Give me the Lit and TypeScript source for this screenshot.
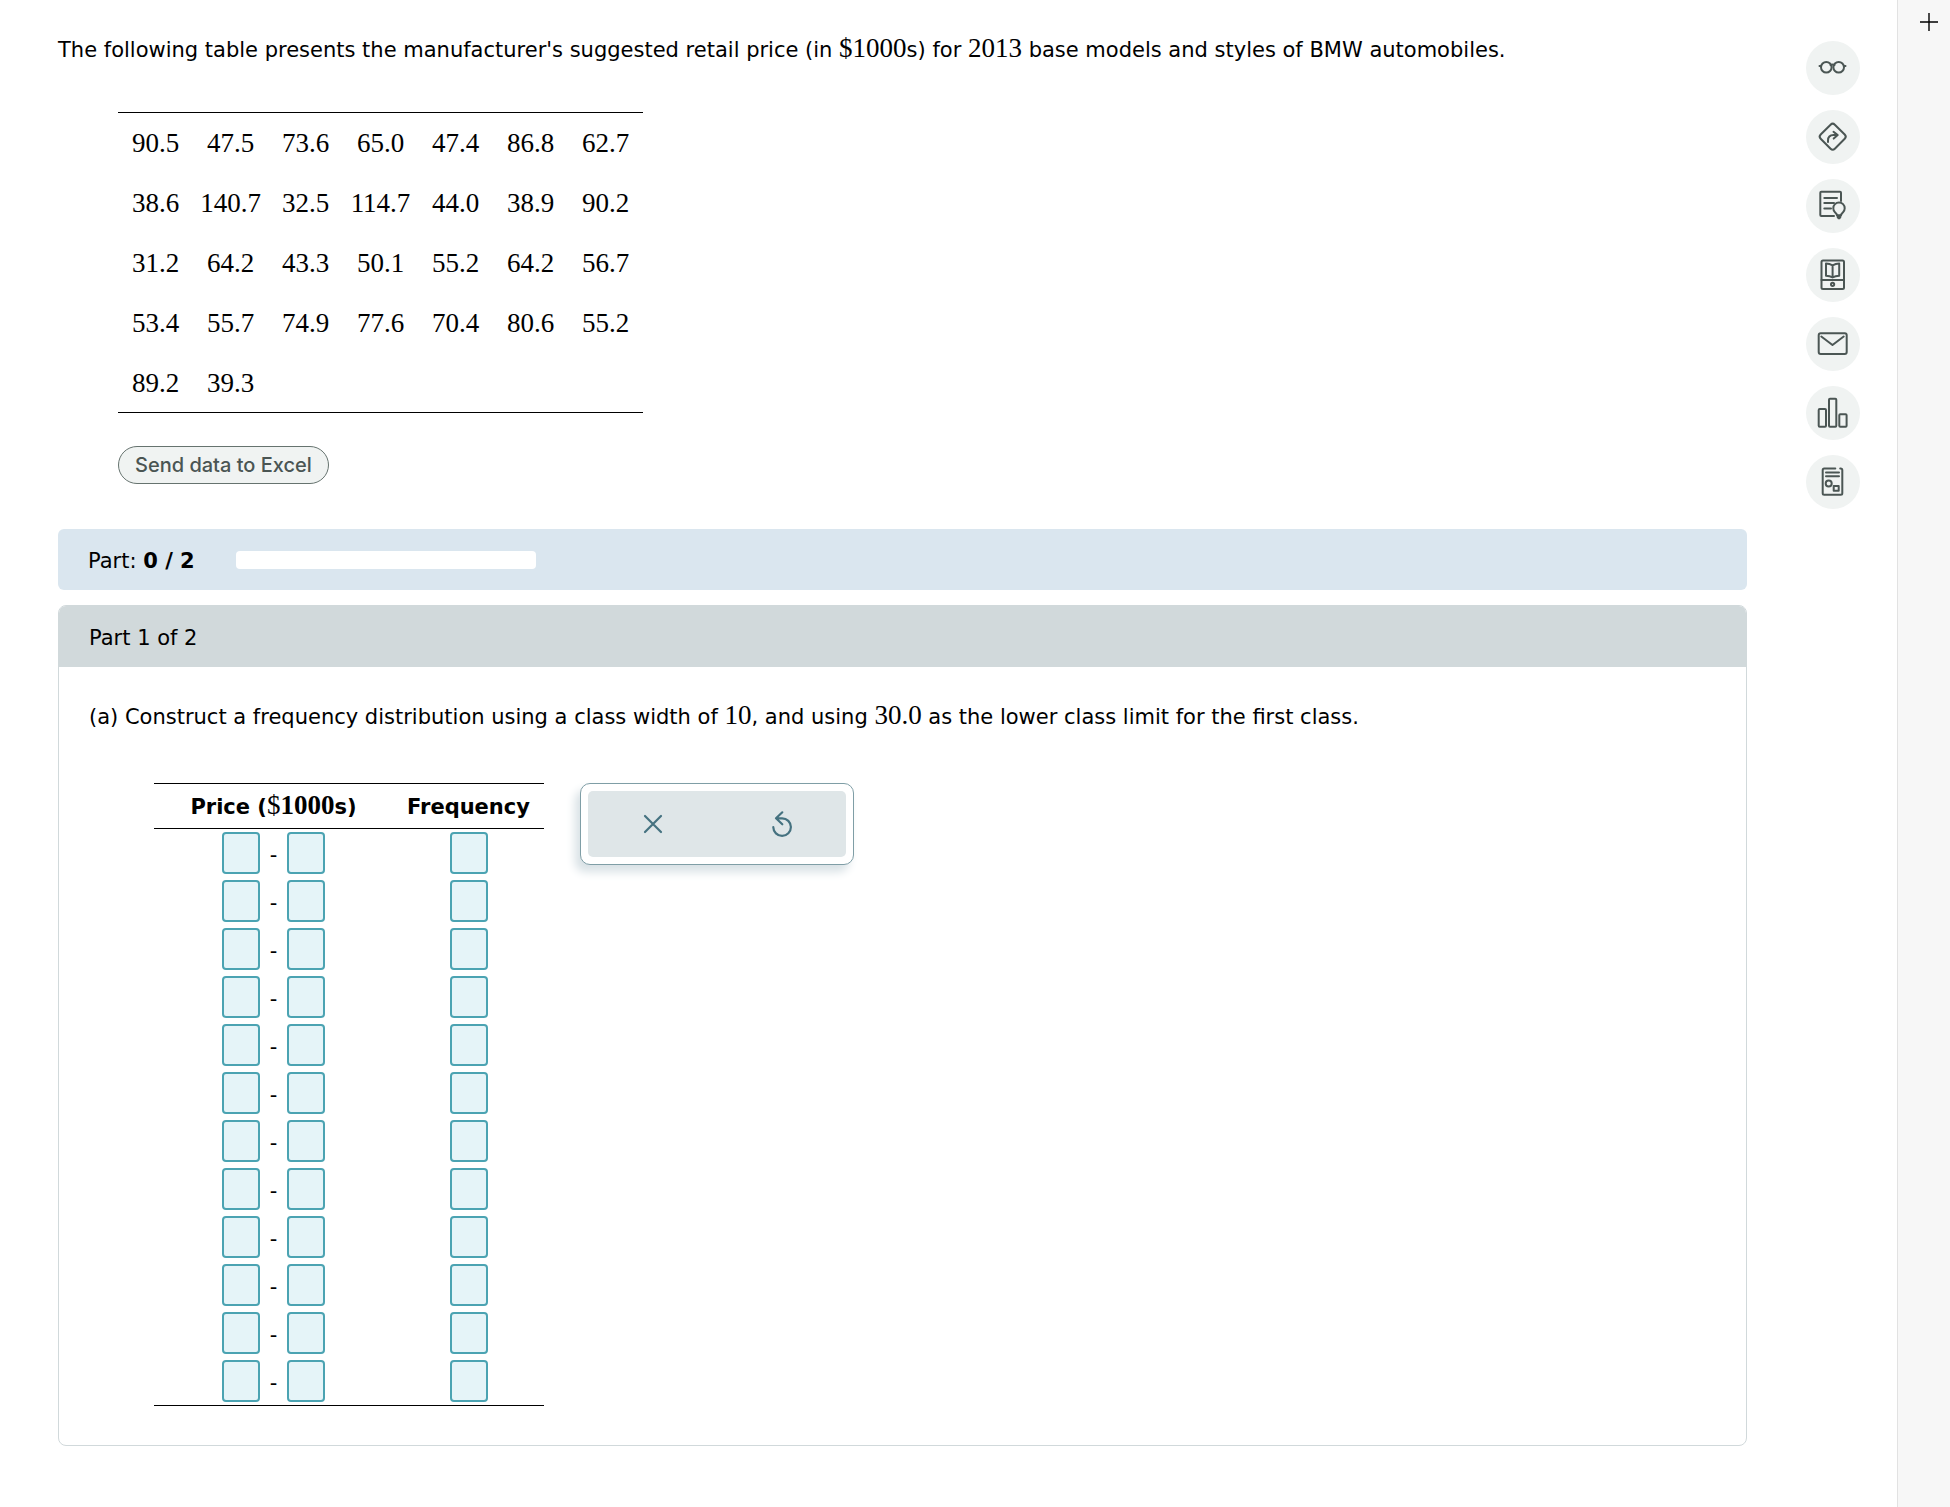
import { LitElement, html, css, svg } from "lit";
import { customElement } from "lit/decorators.js";

const PRICES = [
  ["90.5", "47.5", "73.6", "65.0", "47.4", "86.8", "62.7"],
  ["38.6", "140.7", "32.5", "114.7", "44.0", "38.9", "90.2"],
  ["31.2", "64.2", "43.3", "50.1", "55.2", "64.2", "56.7"],
  ["53.4", "55.7", "74.9", "77.6", "70.4", "80.6", "55.2"],
  ["89.2", "39.3", "", "", "", "", ""],
];

const CLASS_ROWS = Array.from({ length: 12 }, (_, i) => i + 1);

const TOOLS = [
  {
    label: "Reading view",
    icon: svg`<circle cx="20.3" cy="26.3" r="5.3"/><circle cx="32.7" cy="26.3" r="5.3"/>
      <path d="M13.500 25h1.500M38 25h1.500M24.500 24q2-1.200 4 0"/>`,
  },
  {
    label: "Directions",
    icon: svg`<rect x="16.7" y="16.7" width="20" height="20" rx="3" transform="rotate(45 26.7 26.7)"/>
      <path d="M22 32v-1.500q0-5.500 5.500-5.500h4M27.500 21.800l4.200 3.300-4 3.500"/>`,
  },
  {
    label: "Hint",
    icon: svg`<path d="M35 22v-8.300q0-1-1-1H15.300q-1 0-1 1V36q0 1 1 1H28"/>
      <path d="M18.300 19H31M18.300 24H28M18.300 29.500H25"/>
      <path d="M31 36.500q0-1.500-2-3.300a5.700 5.700 0 1 1 8 0q-2 1.800-2 3.300z"/>
      <path class="solid" d="M30.800 35.500h4.400v3l-1.200 1.800h-2l-1.200-1.800z"/>`,
  },
  {
    label: "Textbook",
    icon: svg`<rect x="15.500" y="12.500" width="22.500" height="28.500" rx="1.500"/><path d="M15.500 32H38"/>
      <circle cx="26.600" cy="36.300" r="1.600"/>
      <path d="M26.600 17.300q-3-1.500-6.600-1.700v12.200q3.800.2 6.600 1.600 2.800-1.400 6.600-1.600V15.600q-3.600.2-6.600 1.700v12"/>`,
  },
  {
    label: "Message",
    icon: svg`<rect x="12.700" y="16.200" width="28" height="20.800" rx="2"/><path d="M15.300 19.500l11.200 8.500 11.200-8.500"/>`,
  },
  {
    label: "Statistics",
    icon: svg`<rect x="12.700" y="23" width="7.300" height="17.700" rx="1"/><rect x="23" y="12.700" width="7.300" height="28" rx="1"/>
      <rect x="33.300" y="28.300" width="7.300" height="12.400" rx="1"/>`,
  },
  {
    label: "Worksheet",
    icon: svg`<path d="M29.300 13.500H18.200q-1.500 0-1.500 1.500v23.300q0 1.500 1.500 1.500h16.600q1.500 0 1.500-1.500V14.800q0-1-1.500-1.300h-.6"/>
      <path d="M20 17.500h13M20 21.200h13"/><circle cx="22.700" cy="28.500" r="3"/><rect x="27.700" y="31" width="5" height="4.700"/>`,
  },
];

@customElement("app-root")
export class AppRoot extends LitElement {
  static styles = css`
    :host {
      display: block;
      background: #fff;
      color: #000;
      font-family: "DejaVu Sans", sans-serif;
      font-size: 21px;
      line-height: 30px;
    }
    *, *::before, *::after { box-sizing: border-box; }
    .page { display: flex; min-height: 100vh; }
    .main { flex: 1; min-width: 0; padding: 35px 59px 60px 58px; }
    .text { margin: 0; }
    .num { font-family: "Liberation Serif", serif; font-size: 27px; line-height: 24px; }
    .light { font-weight: 400; }
    .data { margin: 47px 0 33px 60px; }
    .prices {
      border-collapse: collapse;
      border-top: 1px solid #000;
      border-bottom: 1px solid #000;
      table-layout: fixed;
      width: 525px;
    }
    .prices td { width: 75px; height: 60px; padding: 1px 0 0; text-align: center; }
    .excel {
      display: block;
      height: 38px;
      margin: 0 0 45px 60px;
      padding: 1px 16px 0;
      border: 1px solid #66736f;
      border-radius: 19px;
      background: #f0f3f2;
      color: #4a5553;
      font: 500 20px/35px Inter, sans-serif;
    }
    .progress {
      display: flex;
      align-items: center;
      gap: 30px;
      height: 61px;
      padding-left: 30px;
      border-radius: 6px;
      background: #dae6ef;
    }
    .step { min-width: 118px; padding-top: 2px; }
    .track { width: 300px; height: 18px; border-radius: 4px; background: #fff; }
    .panel { margin-top: 15px; border: 1px solid #d1d9db; border-radius: 8px; overflow: hidden; }
    .title { margin: 0; padding: 17px 30px 14px; background: #d1d9db; font-size: 21px; font-weight: 400; }
    .body { padding: 35px 30px 39px; }
    .work { display: flex; align-items: flex-start; gap: 36px; margin: 51px 0 0 65px; }
    .freq { border-collapse: separate; border-spacing: 0; border-bottom: 1px solid #000; }
    .freq th {
      height: 46px;
      padding: 2px 0 0;
      border-top: 1px solid #000;
      border-bottom: 1px solid #000;
      font-size: 21px;
    }
    .freq td { height: 48px; padding: 0; text-align: center; }
    .price { width: 239px; }
    .count { width: 151px; }
    .range { display: flex; justify-content: center; align-items: center; }
    .dash { width: 27px; padding-top: 4px; }
    .box {
      display: block;
      width: 38px;
      height: 42px;
      margin: 0 auto;
      padding: 0 4px;
      border: 2px solid #4ba3b2;
      border-radius: 4px;
      background: #e5f4f8;
      font: 20px "Liberation Serif", serif;
    }
    .range .box { margin: 0; }
    .pad {
      padding: 7px;
      border: 1px solid #7f9ea6;
      border-radius: 10px;
      background: #fff;
      box-shadow: -5px 7px 10px #d8e1e5;
    }
    .keys { display: flex; border-radius: 5px; background: #dfe6e8; }
    .key {
      display: flex;
      align-items: center;
      justify-content: center;
      width: 129px;
      height: 66px;
      padding: 0;
      border: 0;
      background: none;
    }
    .key svg { fill: none; stroke: #457280; stroke-width: 2.2; stroke-linecap: round; stroke-linejoin: round; }
    .rail { display: flex; flex-direction: column; gap: 15px; padding: 41px 37px 0 0; }
    .tool { display: block; width: 54px; height: 54px; padding: 0; border: 0; border-radius: 50%; background: #f0f3f2; }
    .tool svg { display: block; fill: none; stroke: #4b5654; stroke-width: 2; stroke-linecap: round; stroke-linejoin: round; }
    .tool .solid { fill: #4b5654; stroke: none; }
    .side { width: 53px; padding: 13px 0 0 22px; border-left: 1px solid #e2e2e2; background: #f7f7f7; }
    .add { display: block; padding: 0; border: 0; background: none; }
    .add svg { display: block; stroke: #000; stroke-width: 1.4; }
  `;

  render() {
    return html`
      <div class="page">
        <main class="main">
          <p class="text">The following table presents the manufacturer's suggested retail price (in <span class="num">$1000</span>s) for <span class="num">2013</span> base models and styles of BMW automobiles.</p>
          <div class="data">
            <table class="prices">
              <tbody>
                ${PRICES.map((row) => html`<tr>${row.map((v) => html`<td class="num">${v}</td>`)}</tr>`)}
              </tbody>
            </table>
          </div>
          <button class="excel" type="button">Send data to Excel</button>
          <div class="progress">
            <span class="step">Part: <b>0 / 2</b></span>
            <div class="track"></div>
          </div>
          <section class="panel">
            <h2 class="title">Part 1 of 2</h2>
            <div class="body">
              <p class="text">(a) Construct a frequency distribution using a class width of <span class="num">10</span>, and using <span class="num">30.0</span> as the lower class limit for the first class.</p>
              <div class="work">
                <table class="freq">
                  <thead>
                    <tr>
                      <th class="price" scope="col">Price (<span class="num"><span class="light">$</span>1000</span>s)</th>
                      <th class="count" scope="col">Frequency</th>
                    </tr>
                  </thead>
                  <tbody>
                    ${CLASS_ROWS.map((n) => html`
                      <tr>
                        <td>
                          <div class="range">
                            <input class="box" type="text" aria-label="Class ${n} lower limit">
                            <span class="dash">-</span>
                            <input class="box" type="text" aria-label="Class ${n} upper limit">
                          </div>
                        </td>
                        <td><input class="box" type="text" aria-label="Class ${n} frequency"></td>
                      </tr>`)}
                  </tbody>
                </table>
                <div class="pad">
                  <div class="keys">
                    <button class="key" type="button" aria-label="Clear">
                      <svg width="20" height="20" viewBox="0 0 20 20"><path d="M2 2l16 16M18 2L2 18"/></svg>
                    </button>
                    <button class="key" type="button" aria-label="Reset">
                      <svg width="24" height="28" viewBox="0 0 24 28"><path d="M3.300 17.200a8.800 8.800 0 1 0 8.800-8.900H6.500M12.300 2.300L6 8.300l6.300 6"/></svg>
                    </button>
                  </div>
                </div>
              </div>
            </div>
          </section>
        </main>
        <nav class="rail" aria-label="Tools">
          ${TOOLS.map((t) => html`
            <button class="tool" type="button" aria-label=${t.label}>
              <svg width="54" height="54" viewBox="0 0 54 54">${t.icon}</svg>
            </button>`)}
        </nav>
        <aside class="side">
          <button class="add" type="button" aria-label="Add">
            <svg width="18" height="18" viewBox="0 0 18 18"><path d="M9 0v18M0 9h18"/></svg>
          </button>
        </aside>
      </div>
    `;
  }
}
